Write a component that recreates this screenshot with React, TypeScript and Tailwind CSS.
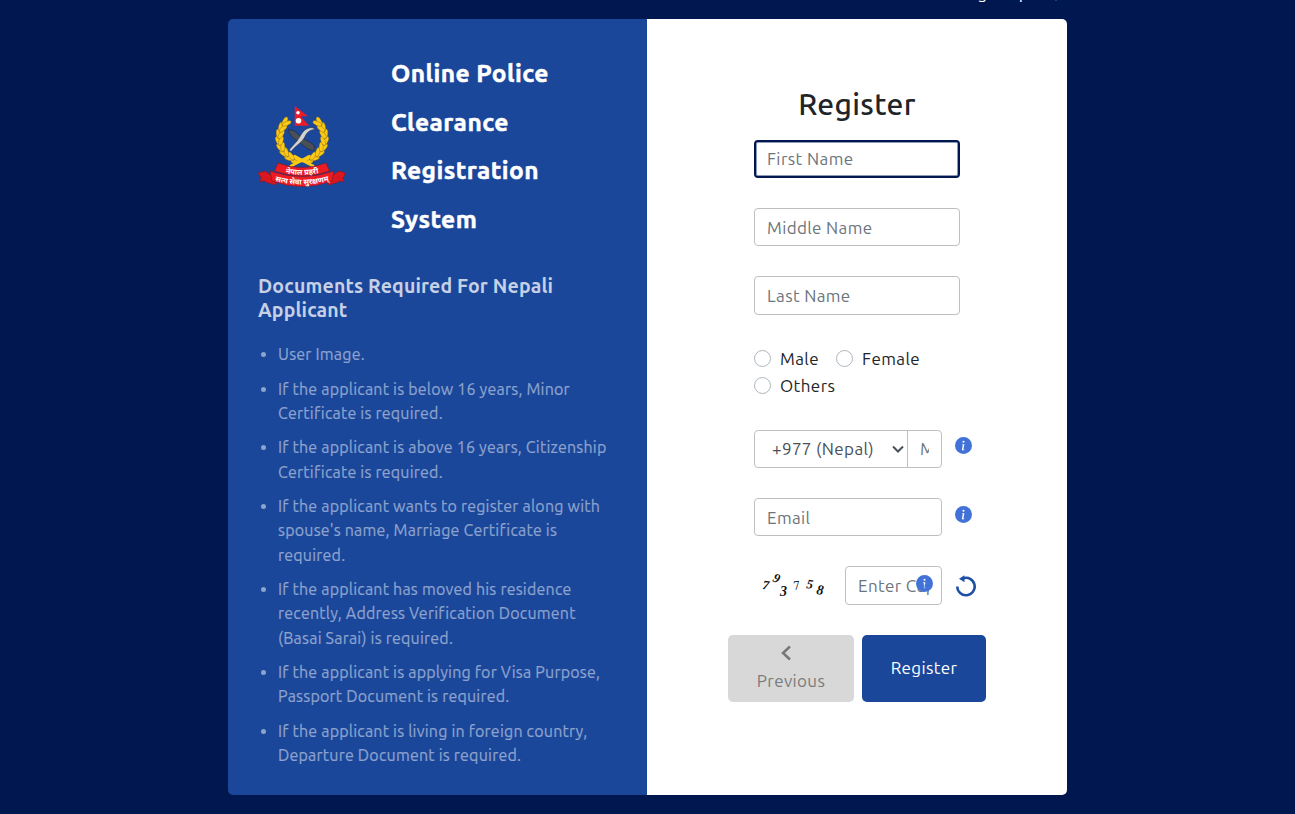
import { BsInfoCircleFill } from "react-icons/bs";

const documents: string[][] = [
  ["User Image."],
  ["If the applicant is below 16 years, Minor", "Certificate is required."],
  ["If the applicant is above 16 years, Citizenship", "Certificate is required."],
  ["If the applicant wants to register along with", "spouse's name, Marriage Certificate is", "required."],
  ["If the applicant has moved his residence", "recently, Address Verification Document", "(Basai Sarai) is required."],
  ["If the applicant is applying for Visa Purpose,", "Passport Document is required."],
  ["If the applicant is living in foreign country,", "Departure Document is required."],
];

const leafAngles = [74, 57, 40, 23, 6, -11, -28, -45];

function Emblem() {
  return (
    <svg viewBox="0 0 88 82" className="h-[82px] w-[88px] shrink-0" aria-label="Nepal Police">
      {[1, -1].map((side) => (
        <g key={side} transform={`translate(44 33) scale(${side} 1)`} fill="#fcc917" stroke="#6b5616" strokeWidth=".35">
          <path d="M0 22.5A22.5 22.5 0 0 0 17-15" fill="none" stroke="#fcc917" strokeWidth="3.5" />
          {leafAngles.map((a) => (
            <g key={a} transform={`rotate(${a}) translate(22.5 0)`}>
              <ellipse cx="1.5" cy="0" rx="2.2" ry="5" transform="rotate(18)" />
              <ellipse cx="-1.5" cy="0" rx="2.1" ry="4.800" transform="rotate(-22)" />
            </g>
          ))}
        </g>
      ))}
      <path d="M32 61.500 52 51M56 61.500 36 51" stroke="#fcc917" strokeWidth="2.6" />
      <path d="m30.500 24.500 6 1.500L44 33l11 6 2 4-2.500 3-5-2.500L38 35c-4-3-7-6-7.500-10.500Z" fill="#4a5058" stroke="#23272e" strokeWidth=".6" />
      <path d="M57 24.500c-6 .5-8 3-10 7-3 6-8 8-14 15l-2-1.500 8-9c4-5 5-11 12-13 3-.8 5-.3 6 1.500Z" fill="#d0d3d4" stroke="#30343b" strokeWidth=".6" />
      <path d="m36.5 .5 14 11H43l8.5 9.5h-15Z" fill="#ed1c24" stroke="#2b3f9a" strokeWidth=".6" />
      <circle cx="40" cy="7.8" r="1.8" fill="#fff" />
      <circle cx="40.500" cy="15.7" r="2.8" fill="#fff" />
      <path d="m0 68 7-2 12 8-1 6-8-2-4-2-4 1 1-4Z M88 68l-7-2-12 8 1 6 8-2 4-2 4 1-1-4Z" fill="#d8171f" stroke="#7e1726" strokeWidth=".5" />
      <path d="M20 58q24 9 48 0l3.500 8q-27 10-55 0Z" fill="#ed1c24" stroke="#7e1726" strokeWidth=".6" />
      <path d="M12 66q32 11 64 0l-2 10q-30 11-60 0Z" fill="#ed1c24" stroke="#7e1726" strokeWidth=".6" />
      <path id="motto-top" d="M20 66.500q24 6.500 48 0" fill="none" />
      <path id="motto-bottom" d="M12 74.500q32 10 64 0" fill="none" />
      <g fill="#fff" fontFamily="Noto Sans Devanagari, Noto Sans, sans-serif" fontWeight="700" textAnchor="middle">
        <text fontSize="7.500"><textPath href="#motto-top" startOffset="50%">नेपाल प्रहरी</textPath></text>
        <text fontSize="7.500"><textPath href="#motto-bottom" startOffset="50%">सत्य सेवा सुरक्षणम्</textPath></text>
      </g>
    </svg>
  );
}

function Info({ className = "" }: { className?: string }) {
  return <BsInfoCircleFill className={`size-[17px] text-[#4272d7] ${className}`} />;
}

const field = "h-[38.2px] rounded-[4px] border border-[#bfbfbf] bg-white px-3 text-[17px] tracking-[.37px] text-gray-600 outline-none placeholder:text-[#6c757d]";

function Radio({ label }: { label: string }) {
  return (
    <label className="flex items-center gap-[9px] text-[17px] tracking-[.42px]">
      <input type="radio" name="gender" className="size-[17px] appearance-none rounded-full border border-[#adb5bd] bg-white" />
      <span>{label}</span>
    </label>
  );
}

function LeftPanel() {
  return (
    <section className="w-[419px] rounded-l-[5px] bg-[#1b479b] px-[30px] pt-[30px]">
      <div className="flex items-center gap-[45px]">
        <div className="pb-[1px]"><Emblem /></div>
        <h1 className="whitespace-nowrap text-[24.5px] font-bold leading-[48.6px] tracking-[.45px] text-white [-webkit-text-stroke:.5px_#fff]">
          Online Police<br />Clearance<br />Registration<br />System
        </h1>
      </div>
      <h2 className="mt-[30.500px] whitespace-nowrap text-[19.5px] font-semibold leading-[24.3px] tracking-[.15px] text-[#c6d1e6]">
        Documents Required For Nepali<br />Applicant
      </h2>
      <ul className="mt-[19.800px] flex flex-col gap-[10px] text-[16px] leading-[24.35px] tracking-[.21px] text-[#8da3cd] [-webkit-text-stroke:.2px_#8da3cd]">
        {documents.map((lines) => (
          <li key={lines[0]} className="flex gap-[12px] pl-[3px]">
            <span className="mt-[10px] size-[5px] shrink-0 rounded-full bg-[#8da3cd]" />
            <span className="whitespace-nowrap">
              {lines.map((line) => <span key={line} className="block">{line}</span>)}
            </span>
          </li>
        ))}
      </ul>
    </section>
  );
}

function Captcha() {
  return (
    <svg viewBox="0 0 80 36" className="h-9 w-20" fill="#111" fontFamily="Liberation Serif, serif" fontWeight="700" fontStyle="italic">
      <text transform="translate(8 23) rotate(8)" fontSize="13">7</text>
      <text transform="translate(18 15) rotate(22)" fontSize="13">9</text>
      <text transform="translate(26 30)" fontSize="14">3</text>
      <text transform="translate(40 24) rotate(-8)" fontSize="13" fontWeight="400" fontStyle="normal">7</text>
      <text transform="translate(52 22) rotate(8)" fontSize="13">5</text>
      <text transform="translate(62 28) rotate(8)" fontSize="14">8</text>
    </svg>
  );
}

function RegisterForm() {
  return (
    <section className="flex w-[420px] flex-col rounded-r-[5px] bg-white pl-[107px] text-[#212529]">
      <h2 className="mt-[66px] h-[39px] w-[206px] text-center text-[30px] font-medium leading-[38px] tracking-[.3px]">Register</h2>
      <div className="mt-[16px] flex w-[206px] flex-col gap-[30px]">
        <input placeholder="First Name" className="h-[38.2px] rounded-[4px] border-2 border-[#00174f] bg-white px-[11px] pb-[2px] text-[17px] tracking-[.42px] shadow-[inset_0_0_0_1px_#8c99b8] outline-none placeholder:text-[#6c757d]" />
        <input placeholder="Middle Name" className={field} />
        <input placeholder="Last Name" className={field} />
      </div>
      <div className="mt-[30px] flex w-[206px] flex-wrap gap-x-[17px] leading-[27px]">
        <Radio label="Male" /><Radio label="Female" /><Radio label="Others" />
      </div>
      <div className="mt-[31.4px] flex flex-col gap-[30px]">
        <div className="flex h-[38.2px] gap-[13px]">
          <div className="flex w-[188px] rounded-[4px] border border-[#bfbfbf] text-[17px] tracking-[.37px]">
            <div className="flex w-[153px] items-center justify-between border-r border-[#bfbfbf] pl-[17px] pr-[3px] text-[#495057]">
              <span>+977 (Nepal)</span>
              <svg viewBox="0 0 12 8" className="h-2 w-3" fill="none" stroke="#495057" strokeWidth="2"><path d="m1 1.5 5 5 5-5" /></svg>
            </div>
            <input placeholder="Mobile" className="w-[33px] px-3 outline-none placeholder:text-[#6c757d]" />
          </div>
          <Info className="mt-[7px]" />
        </div>
        <div className="flex gap-[13px]">
          <input placeholder="Email" className={`w-[188px] ${field}`} />
          <Info className="mt-[8px]" />
        </div>
        <div className="flex h-[38.2px]">
          <Captcha />
          <div className="relative ml-[11px]">
            <input placeholder="Enter Captcha" className={`w-[97px] ${field}`} />
            <Info className="absolute left-[71px] top-[9px]" />
          </div>
          <svg viewBox="0 0 22 22" className="ml-[13px] mt-[9px] size-[22px]" fill="none" stroke="#1f4fa5" strokeWidth="2.5">
            <path d="M2.300 11.500a8.700 8.700 0 1 0 6.200-8.300" /><path d="M4 3.800 9.500 .3v7Z" fill="#1f4fa5" stroke="none" />
          </svg>
        </div>
      </div>
      <div className="-ml-[26px] mt-[30.400px] flex gap-2 text-[17px] tracking-[.37px]">
        <button className="flex h-[67px] w-[126px] flex-col items-center rounded-[5px] bg-[#d8d8d8] pt-[10px] text-[#7b7b7b]">
          <svg viewBox="0 0 10 16" className="-ml-[11px] h-4 w-[10px]" fill="none" stroke="#777" strokeWidth="2.5"><path d="M9 1.5 2 8l7 6.5" /></svg>
          <span className="mt-[8px] leading-6">Previous</span>
        </button>
        <button className="h-[67px] w-[124px] rounded-[5px] bg-[#1b479b] pb-[2px] text-white">Register</button>
      </div>
    </section>
  );
}

export default function App() {
  return (
    <div className="flex h-[814px] flex-col items-center overflow-hidden bg-[#00174f] font-['Ubuntu','Noto_Sans',sans-serif]">
      <header className="relative h-[19px] w-[839px] shrink-0">
        <span className="absolute bottom-[14px] right-[38px] whitespace-nowrap text-[17px] leading-6 tracking-[.37px] text-white">Tracking Help</span>
        <span className="absolute right-[10px] top-0 h-px w-0.5 bg-[#0b4a66]" />
      </header>
      <main className="flex h-[776px] shrink-0">
        <LeftPanel />
        <RegisterForm />
      </main>
    </div>
  );
}
